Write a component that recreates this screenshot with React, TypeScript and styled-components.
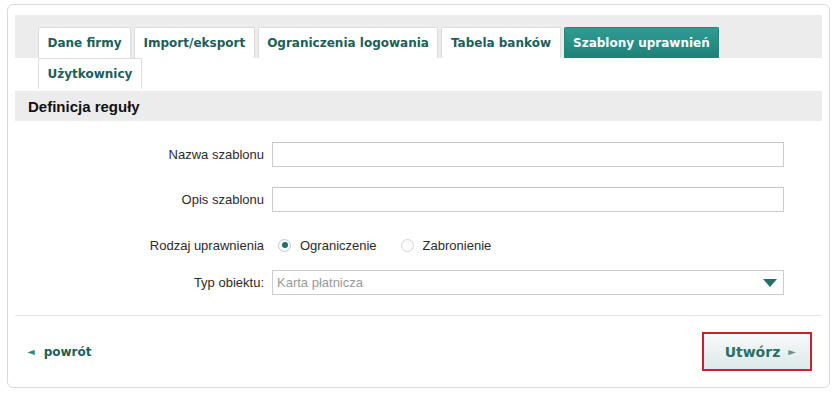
import React from 'react';
import styled, { createGlobalStyle } from "styled-components";

const GlobalStyle = createGlobalStyle`
  body {
    margin: 0;
    background: #fff;
    font-family: "Liberation Sans", Arial, sans-serif;
  }
`;

const Card = styled.div`
  box-sizing: border-box;
  width: 823px;
  height: 384px;
  margin: 4px 0 0 7px;
  padding: 10px 7px 0 7px;
  border: 1px solid #d9d9d9;
  border-radius: 6px;
  display: flex;
  flex-direction: column;
`;

const TabBar = styled.div`
  display: flex;
  flex-wrap: wrap;
  gap: 0 3px;
  padding: 12px 0 0 23px;
  background: linear-gradient(to bottom, #ececec 0, #ececec 43px, #fff 43px);
`;

const TabBreak = styled.div`
  flex-basis: 100%;
  height: 0;
`;

const Tab = styled.div<{ $active?: boolean }>`
  box-sizing: border-box;
  height: 31px;
  padding: 0 8.5px;
  display: flex;
  align-items: center;
  white-space: nowrap;
  font-family: "DejaVu Sans", Verdana, sans-serif;
  font-weight: bold;
  font-size: 12px;
  border: 1px solid ${p => (p.$active ? "#23857d" : "#dcdcdc")};
  border-bottom: none;
  border-radius: 2px 2px 0 0;
  color: ${p => (p.$active ? "#fff" : "#1d5e5a")};
  background: ${p => (p.$active ? "linear-gradient(#2f9c92, #1f8078)" : "#fff")};
`;

const SectionHeader = styled.div`
  height: 30px;
  margin-top: 2px;
  padding-left: 13px;
  display: flex;
  align-items: center;
  background: #ececec;
  font-size: 15px;
  font-weight: bold;
  color: #111;
`;

const Form = styled.div`
  display: flex;
  flex-direction: column;
  padding-top: 21px;
`;

const Row = styled.div<{ $mt?: number; $h?: number }>`
  display: flex;
  align-items: center;
  gap: 8px;
  margin-top: ${p => p.$mt ?? 0}px;
  height: ${p => p.$h ?? 25}px;
`;

const Label = styled.div`
  width: 249px;
  text-align: right;
  font-size: 13px;
  color: #2b2b2b;
`;

const TextInput = styled.div`
  box-sizing: border-box;
  width: 512px;
  height: 25px;
  border: 1px solid #cdcdcd;
  border-top-color: #c4c4c4;
  background: #fff;
`;

const RadioGroup = styled.div`
  display: flex;
  align-items: center;
  padding-left: 6px;
`;

const RadioItem = styled.label`
  display: flex;
  align-items: center;
  gap: 9px;
  margin-right: 24px;
  font-size: 13px;
  color: #2b2b2b;
`;

const RadioCircle = styled.span<{ $checked?: boolean }>`
  box-sizing: border-box;
  width: 13px;
  height: 13px;
  border-radius: 50%;
  border: 1px solid ${p => (p.$checked ? "#b8cfcd" : "#d4d4d4")};
  background: #fbfbfb;
  display: flex;
  align-items: center;
  justify-content: center;

  &::after {
    content: "";
    width: 6px;
    height: 6px;
    border-radius: 50%;
    background: ${p => (p.$checked ? "#1f6f6a" : "transparent")};
  }
`;

const Select = styled.div`
  box-sizing: border-box;
  width: 512px;
  height: 25px;
  border: 1px solid #cdcdcd;
  padding: 0 6px 0 4px;
  display: flex;
  align-items: center;
  justify-content: space-between;
  font-size: 13px;
  color: #9a9a9a;
`;

const Separator = styled.div`
  height: 1px;
  margin-top: 20px;
  background: #e6e6e6;
`;

const Footer = styled.div`
  display: flex;
  align-items: center;
  justify-content: space-between;
  padding: 16px 10px 0 12px;
`;

const BackLink = styled.div`
  display: flex;
  align-items: center;
  gap: 9px;
  font-family: "DejaVu Sans", Verdana, sans-serif;
  font-weight: bold;
  font-size: 12px;
  color: #1d5e5a;
`;

const SmallArrow = styled.span<{ $color: string }>`
  font-size: 10px;
  color: ${p => p.$color};
`;

const CreateButton = styled.div`
  box-sizing: border-box;
  width: 110px;
  height: 39px;
  border: 2px solid #c9222c;
  background: linear-gradient(#f7fafa, #dde8e9);
  display: flex;
  align-items: center;
  justify-content: flex-end;
  gap: 8px;
  padding-right: 14px;
  font-family: "DejaVu Sans", Verdana, sans-serif;
  font-weight: bold;
  font-size: 14px;
  color: #2a6e6a;
`;

function App() {
  return (
    <>
      <GlobalStyle />
      <Card>
        <TabBar>
          <Tab>Dane firmy</Tab>
          <Tab>Import/eksport</Tab>
          <Tab>Ograniczenia logowania</Tab>
          <Tab>Tabela banków</Tab>
          <Tab $active>Szablony uprawnień</Tab>
          <TabBreak />
          <Tab>Użytkownicy</Tab>
        </TabBar>
        <SectionHeader>Definicja reguły</SectionHeader>
        <Form>
          <Row>
            <Label>Nazwa szablonu</Label>
            <TextInput />
          </Row>
          <Row $mt={20}>
            <Label>Opis szablonu</Label>
            <TextInput />
          </Row>
          <Row $mt={23} $h={20}>
            <Label>Rodzaj uprawnienia</Label>
            <RadioGroup>
              <RadioItem>
                <RadioCircle $checked />
                Ograniczenie
              </RadioItem>
              <RadioItem>
                <RadioCircle />
                Zabronienie
              </RadioItem>
            </RadioGroup>
          </Row>
          <Row $mt={15}>
            <Label>Typ obiektu:</Label>
            <Select>
              <span>Karta płatnicza</span>
              <svg width="14" height="8" viewBox="0 0 14 8">
                <path d="M0 0 H14 L7 8 Z" fill="#236f6b" />
              </svg>
            </Select>
          </Row>
        </Form>
        <Separator />
        <Footer>
          <BackLink>
            <SmallArrow $color="#2f8a83">◄</SmallArrow>
            powrót
          </BackLink>
          <CreateButton>
            Utwórz
            <SmallArrow $color="#6f8f8e">►</SmallArrow>
          </CreateButton>
        </Footer>
      </Card>
    </>
  );
}

export default App;
